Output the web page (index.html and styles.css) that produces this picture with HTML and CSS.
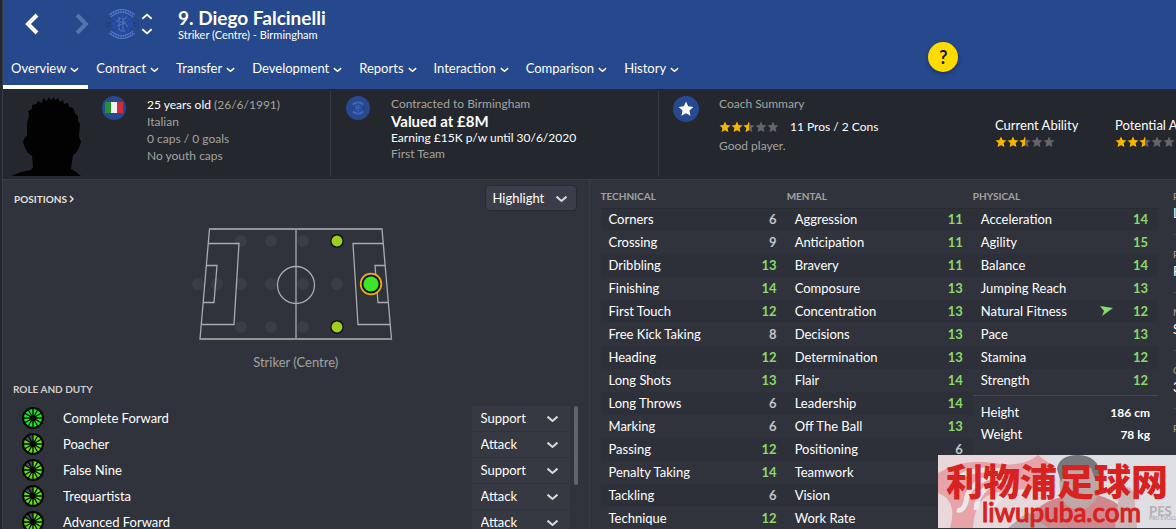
FILE: index.html
```
<!DOCTYPE html>
<html lang="en">
<head>
    <meta charset="UTF-8">
    <meta name="viewport" content="width=device-width, initial-scale=1.0">
    <title>Diego Falcinelli - Overview</title>
    <link rel="stylesheet" href="styles.css">
</head>
<body>
    <!-- Shared icons -->
    <svg class="defs" width="0" height="0" aria-hidden="true">
        <symbol id="chevron" viewBox="0 0 12 12"><path d="M2 4.5 6 8l4-3.5" fill="none" stroke="currentColor" stroke-width="1.6"/></symbol>
        <symbol id="star" viewBox="0 0 12 12"><path d="M6 .4 7.6 4l3.9.5-2.900 2.600.8 4L6 9.200l-3.400 1.900.8-4L.5 4.500 4.400 4z"/></symbol>
        <symbol id="rating" viewBox="0 0 60 12">
            <g fill="#f7b500">
                <use href="#star" width="12" height="12"/>
                <use href="#star" x="12" width="12" height="12"/>
            </g>
            <g fill="#63656b">
                <use href="#star" x="24" width="12" height="12"/>
                <use href="#star" x="36" width="12" height="12"/>
                <use href="#star" x="48" width="12" height="12"/>
            </g>
            <path d="M30 .4 28.400 4l-3.900.5 2.900 2.600-.8 4 3.400-1.900z" fill="#f7b500"/>
        </symbol>
        <symbol id="crest" viewBox="0 0 32 30">
            <g fill="none" stroke="#5475c4">
                <path d="M4 7Q16-3 28 7M4 23q12 10 24 0" stroke-width="4"/>
                <path d="M4 7Q16-3 28 7M4 23q12 10 24 0" stroke="#27489b" stroke-width="2" stroke-dasharray="1.5 1"/>
                <path d="M0 14h5M0 17h4M27 14h5M28 17h4" stroke="#23407f" stroke-width="2"/>
                <circle cx="16" cy="15" r="8" stroke="#2b4da8" stroke-width="5" stroke-dasharray="3 1"/>
                <path d="M13 8v11q0 3 3 3h3M17 9v12M21 8l-4 3M10 13l5-4M11 17l8-3 3 4M14 13h6"/>
            </g>
        </symbol>
        <symbol id="spokes" viewBox="0 0 22 22">
            <path d="M11 0v22M0 11h22M5.500 1.500l11 19M16.500 1.500l-11 19M1.500 5.500l19 11M20.500 5.500l-19 11" fill="none" stroke="#050805" stroke-width="1.300"/>
            <circle cx="11" cy="11" r="3.200" fill="#050805"/>
            <circle cx="11" cy="11" r="10" fill="none" stroke="#050805" stroke-width="2"/>
        </symbol>
        <symbol id="wheel-full" viewBox="0 0 22 22">
            <circle cx="11" cy="11" r="10" fill="#0cf01c"/>
            <use href="#spokes" width="22" height="22"/>
        </symbol>
        <symbol id="wheel-most" viewBox="0 0 22 22">
            <circle cx="11" cy="11" r="10" fill="#62e205"/>
            <path d="M11 11V1Q5 1 2.300 6z" fill="#484b4c"/>
            <use href="#spokes" width="22" height="22"/>
        </symbol>
    </svg>

    <div class="app">
        <header>
            <div class="title-bar">
                <button class="nav-btn" aria-label="Back"><svg width="14" height="22" viewBox="0 0 14 22"><path d="M12 2 3 11l9 9" fill="none" stroke="#fff" stroke-width="4"/></svg></button>
                <button class="nav-btn forward" aria-label="Forward" disabled><svg width="14" height="22" viewBox="0 0 14 22"><path d="M2 2l9 9-9 9" fill="none" stroke="#5474ae" stroke-width="4"/></svg></button>
                <svg class="crest" width="32" height="30"><use href="#crest"/></svg>
                <div class="stepper">
                    <button aria-label="Previous player"><svg class="up" width="14" height="14"><use href="#chevron"/></svg></button>
                    <button aria-label="Next player"><svg width="14" height="14"><use href="#chevron"/></svg></button>
                </div>
                <div class="player">
                    <h1>9. Diego Falcinelli</h1>
                    <p>Striker (Centre) - Birmingham</p>
                </div>
            </div>
            <nav>
                <a href="#" class="active">Overview <svg><use href="#chevron"/></svg></a>
                <a href="#">Contract <svg><use href="#chevron"/></svg></a>
                <a href="#">Transfer <svg><use href="#chevron"/></svg></a>
                <a href="#">Development <svg><use href="#chevron"/></svg></a>
                <a href="#">Reports <svg><use href="#chevron"/></svg></a>
                <a href="#">Interaction <svg><use href="#chevron"/></svg></a>
                <a href="#">Comparison <svg><use href="#chevron"/></svg></a>
                <a href="#">History <svg><use href="#chevron"/></svg></a>
            </nav>
            <button class="help">?</button>
        </header>

        <!-- Player summary -->
        <section class="summary">
            <div class="card">
                <svg class="portrait" width="80" height="80" viewBox="3 97 80 80"><path d="M11 177 21 173 31 171 33 168 32 157 28 154 25 149 23 143 25 138 27 137 27 125 29 116 28 112 32 110 32 106 36 105 38 102 42 104 43 99 47 102 49 98 51 101 54 98 55 101 58 99 60 103 63 101 64 105 68 104 69 108 73 109 75 114 78 117 78 122 80 125 79 137 81 143 79 149 76 154 73 156 71 170 76 173 81 177z" fill="#020202"/></svg>
                <svg class="badge" width="24" height="24" viewBox="0 0 24 24">
                    <circle cx="12" cy="12" r="12" fill="#26498f"/>
                    <path d="M3 6h6v11H3z" fill="#279232"/><path d="M9 6h6v11H9z" fill="#f4f1f2"/><path d="M15 6h6v11h-6z" fill="#d22c3e"/>
                </svg>
                <div class="age">
                    <p class="main">25 years old <span>(26/6/1991)</span></p>
                    <p>Italian</p>
                    <p>0 caps / 0 goals</p>
                    <p>No youth caps</p>
                </div>
            </div>
            <div class="card contract">
                <svg class="badge" width="24" height="24" viewBox="0 0 24 24">
                    <circle cx="12" cy="12" r="12" fill="#26498f"/>
                    <use href="#crest" x="5" y="5" width="14" height="14"/>
                </svg>
                <div>
                    <p>Contracted to Birmingham</p>
                    <p class="value">Valued at £8M</p>
                    <p class="main">Earning £15K p/w until 30/6/2020</p>
                    <p>First Team</p>
                </div>
            </div>
            <div class="card coach">
                <svg class="badge" width="26" height="26" viewBox="0 0 26 26">
                    <circle cx="13" cy="13" r="13" fill="#26498f"/>
                    <use href="#star" x="5" y="5" width="16" height="16" fill="#fff"/>
                </svg>
                <div class="report">
                    <p>Coach Summary</p>
                    <p class="main"><svg class="rating"><use href="#rating"/></svg> 11 Pros / 2 Cons</p>
                    <p>Good player.</p>
                </div>
                <div class="ability">
                    <p class="main">Current Ability</p>
                    <svg class="rating"><use href="#rating"/></svg>
                </div>
                <div class="ability">
                    <p class="main">Potential Ability</p>
                    <svg class="rating"><use href="#rating"/></svg>
                </div>
            </div>
        </section>

        <main>
            <section class="positions">
                <div class="panel-head">
                    <h2><a href="#">POSITIONS <svg width="8" height="8" viewBox="0 0 8 8"><path d="M2 1l3 3-3 3" fill="none" stroke="currentColor" stroke-width="1.5"/></svg></a></h2>
                    <div class="pick highlight">
                        <select aria-label="Highlight"><option>Highlight</option></select>
                        <svg><use href="#chevron"/></svg>
                    </div>
                </div>

                <svg class="pitch" width="208" height="120" viewBox="192 224 208 120">
                    <g fill="#3a3d46">
                        <circle cx="198" cy="284" r="6"/><circle cx="217" cy="284" r="6"/>
                        <circle cx="241" cy="241" r="6"/><circle cx="241" cy="284" r="6"/><circle cx="241" cy="327" r="6"/>
                        <circle cx="271" cy="241" r="6"/><circle cx="271" cy="284" r="6"/><circle cx="271" cy="327" r="6"/>
                        <circle cx="303" cy="241" r="6"/><circle cx="303" cy="284" r="6"/><circle cx="303" cy="327" r="6"/>
                        <circle cx="337" cy="284" r="6"/>
                    </g>
                    <g fill="none" stroke="#a9abae" stroke-width="1.3">
                        <path d="M209.500 229h172.500L391.500 339H200z"/>
                        <path d="M296 229v110M208 243.500h31l-5 81h-32.500M206 265.500h11l-3 37h-11M383 243.500h-30l5 81h32M385 265.500h-10l3 37h10"/>
                        <circle cx="296" cy="285" r="18.500"/>
                    </g>
                    <path d="M209 229h173M200 339h192" stroke="#929496" stroke-width="2"/>
                    <g fill="#9fce20" stroke="#14170f" stroke-width="1.5">
                        <circle cx="337" cy="241" r="6.2"/><circle cx="337" cy="327" r="6.2"/>
                    </g>
                    <circle cx="371" cy="284" r="10.300" fill="#101510" stroke="#efae12" stroke-width="1.7"/>
                    <circle cx="371" cy="284" r="7.600" fill="#3fe32c"/>
                </svg>
                <p class="pitch-label">Striker (Centre)</p>

                <h2 class="role-head">ROLE AND DUTY</h2>
                <div class="roles">
                    <ul>
                        <li><svg class="wheel"><use href="#wheel-full"/></svg><span>Complete Forward</span>
                            <div class="pick"><select aria-label="Complete Forward duty"><option>Support</option></select><svg><use href="#chevron"/></svg></div></li>
                        <li><svg class="wheel"><use href="#wheel-most"/></svg><span>Poacher</span>
                            <div class="pick"><select aria-label="Poacher duty"><option>Attack</option></select><svg><use href="#chevron"/></svg></div></li>
                        <li><svg class="wheel"><use href="#wheel-most"/></svg><span>False Nine</span>
                            <div class="pick"><select aria-label="False Nine duty"><option>Support</option></select><svg><use href="#chevron"/></svg></div></li>
                        <li><svg class="wheel"><use href="#wheel-most"/></svg><span>Trequartista</span>
                            <div class="pick"><select aria-label="Trequartista duty"><option>Attack</option></select><svg><use href="#chevron"/></svg></div></li>
                        <li><svg class="wheel"><use href="#wheel-most"/></svg><span>Advanced Forward</span>
                            <div class="pick"><select aria-label="Advanced Forward duty"><option>Attack</option></select><svg><use href="#chevron"/></svg></div></li>
                    </ul>
                    <div class="scrollbar"></div>
                </div>
            </section>

            <!-- Attributes -->
            <section class="attributes">
                <table>
                    <thead><tr><th colspan="2">TECHNICAL</th></tr></thead>
                    <tbody>
                        <tr><td>Corners</td><td>6</td></tr>
                        <tr><td>Crossing</td><td>9</td></tr>
                        <tr><td>Dribbling</td><td class="good">13</td></tr>
                        <tr><td>Finishing</td><td class="good">14</td></tr>
                        <tr><td>First Touch</td><td class="good">12</td></tr>
                        <tr><td>Free Kick Taking</td><td>8</td></tr>
                        <tr><td>Heading</td><td class="good">12</td></tr>
                        <tr><td>Long Shots</td><td class="good">13</td></tr>
                        <tr><td>Long Throws</td><td>6</td></tr>
                        <tr><td>Marking</td><td>6</td></tr>
                        <tr><td>Passing</td><td class="good">12</td></tr>
                        <tr><td>Penalty Taking</td><td class="good">14</td></tr>
                        <tr><td>Tackling</td><td>6</td></tr>
                        <tr><td>Technique</td><td class="good">12</td></tr>
                    </tbody>
                </table>
                <table>
                    <thead><tr><th colspan="2">MENTAL</th></tr></thead>
                    <tbody>
                        <tr><td>Aggression</td><td class="good">11</td></tr>
                        <tr><td>Anticipation</td><td class="good">11</td></tr>
                        <tr><td>Bravery</td><td class="good">11</td></tr>
                        <tr><td>Composure</td><td class="good">13</td></tr>
                        <tr><td>Concentration</td><td class="good">13</td></tr>
                        <tr><td>Decisions</td><td class="good">13</td></tr>
                        <tr><td>Determination</td><td class="good">13</td></tr>
                        <tr><td>Flair</td><td class="good">14</td></tr>
                        <tr><td>Leadership</td><td class="good">14</td></tr>
                        <tr><td>Off The Ball</td><td class="good">13</td></tr>
                        <tr><td>Positioning</td><td>6</td></tr>
                        <tr><td>Teamwork</td><td></td></tr>
                        <tr><td>Vision</td><td></td></tr>
                        <tr><td>Work Rate</td><td></td></tr>
                    </tbody>
                </table>
                <div class="physical">
                    <table>
                        <thead><tr><th colspan="2">PHYSICAL</th></tr></thead>
                        <tbody>
                            <tr><td>Acceleration</td><td class="good">14</td></tr>
                            <tr><td>Agility</td><td class="good">15</td></tr>
                            <tr><td>Balance</td><td class="good">14</td></tr>
                            <tr><td>Jumping Reach</td><td class="good">13</td></tr>
                            <tr><td>Natural Fitness</td><td class="good"><svg class="trend" width="13" height="10" viewBox="0 0 13 10"><path d="M0 0 13 2 2 10l2-5z" fill="#8bd96b"/></svg>12</td></tr>
                            <tr><td>Pace</td><td class="good">13</td></tr>
                            <tr><td>Stamina</td><td class="good">12</td></tr>
                            <tr><td>Strength</td><td class="good">12</td></tr>
                        </tbody>
                    </table>
                    <table class="body-size">
                        <tbody>
                            <tr><td>Height</td><td>186 cm</td></tr>
                            <tr><td>Weight</td><td>78 kg</td></tr>
                        </tbody>
                    </table>
                </div>
                <dl>
                    <div><dt>P</dt><dd>L</dd></div>
                    <div><dt>P</dt><dd>F</dd></div>
                    <div><dt>M</dt><dd>S</dd></div>
                    <div><dt>O</dt><dd>3</dd></div>
                    <div><dt>P</dt></div>
                </dl>
            </section>
        </main>
    </div>

    <!-- Site watermark -->
    <aside class="watermark">
        <svg viewBox="0 0 238 73" preserveAspectRatio="none" aria-hidden="true">
            <path d="M0 0h238v73H0z" fill="#dfdee2"/>
            <path d="M0 0h110v73H0z" fill="#e9d8db"/>
            <path d="M0 18Q25 3 55 8T100 0l16 12-20 21-34 4q-25 2-27 36H12Q20 45 0 38z" fill="#e6a4aa"/>
            <path d="M20 22q25-12 50-4-40 5-42 29-3 10-9 8M38 55q2-28 32-28M50 65q2-20 25-30" fill="none" stroke="#efe6e8" stroke-width="5"/>
            <path d="M92 73q2-25 32-31l35-2q30 7 34 33z" fill="#cf888d"/>
            <path d="M121 11q5-11 20-11 18 1 20 18l-1 22q-7 15-20 15-15-3-18-18z" fill="#bda8a8"/>
            <path d="M119 14Q121 0 140 0q20 1 22 18l-5 6-4-11-25-2-5 16z" fill="#78777d"/>
            <path d="M182 33q9-4 14 5l3 35h-22z" fill="#cbb6b8"/>
            <path d="M70 73l20-16 20 16z" fill="#b7a6ac"/>
        </svg>
        <strong>利物浦足球网</strong>
        <span class="site">liwupuba.com</span>
        <span class="game">PES<small>PRO EVOLU</small></span>
    </aside>
</body>
</html>
```
FILE: styles.css
```
* {
    box-sizing: border-box;
}

body {
    margin: 0;
    height: 100vh;
    overflow: hidden;
    background: #24262e;
    color: #fff;
    font-family: Lato, "Noto Sans CJK SC", sans-serif;
    font-size: 13px;
    line-height: 17px;
}

h1, h2, p, ul, dl, dd {
    margin: 0;
    padding: 0;
}

a {
    color: inherit;
    text-decoration: none;
}

button, select {
    font: inherit;
    color: inherit;
    border: none;
    background: none;
    padding: 0;
    cursor: pointer;
}

svg {
    display: block;
    flex: none;
}

.defs {
    position: absolute;
}

.app {
    margin-left: 2px;
    border-left: 1px solid #373b46;
    min-height: 100vh;
    background: #31333c;
}

/* Header */
header {
    position: relative;
    height: 89px;
    background: #26488d;
}

.title-bar {
    display: flex;
    height: 49px;
    padding: 9px 0 0 22px;
}

.nav-btn {
    height: 30px;
}

.nav-btn.forward {
    margin-left: 36px;
}

.crest {
    margin-left: 17px;
}

.stepper {
    display: flex;
    flex-direction: column;
    padding: 1px 0 0 2px;
    margin-right: 24px;
}

.stepper button {
    height: 14px;
}

.stepper .up {
    transform: scaleY(-1);
}

h1 {
    font-size: 19px;
    line-height: 18px;
    font-weight: bold;
}

.title-bar p {
    font-size: 11px;
    line-height: 15px;
}

nav {
    display: flex;
    height: 40px;
}

nav a {
    display: flex;
    align-items: center;
    gap: 3px;
    padding: 6px 8px 4px;
    border-bottom: 4px solid transparent;
}

nav a.active {
    border-bottom-color: #fff;
}

nav svg {
    width: 11px;
    height: 11px;
    margin-top: 2px;
}

.help {
    position: absolute;
    left: 80%;
    top: 42px;
    margin-left: -13px;
    width: 30px;
    height: 30px;
    border-radius: 50%;
    background: #ffdb00;
    color: #111;
    font-size: 18px;
    font-weight: bold;
    box-shadow: 0 2px 4px rgba(0, 0, 0, 0.3);
}

/* Player summary */
.summary {
    display: grid;
    grid-template-columns: 327fr 328fr 518fr;
    height: 91px;
    background: #24272e;
    border-bottom: 1px solid #3a3d46;
    overflow: hidden;
}

.card {
    display: flex;
    min-width: 0;
    margin: 2px 0;
    padding-top: 5px;
    color: #a3a49f;
    font-size: 12px;
    white-space: nowrap;
}

.card + .card {
    border-left: 1px solid #34373e;
}

.card .main {
    color: #fff;
}

.main span {
    color: #a3a49f;
}

.badge {
    margin-left: 15px;
}

.portrait + .badge {
    margin-left: 19px;
}

.age {
    margin-left: 21px;
}

.contract .badge {
    margin-right: 21px;
}

.coach .badge {
    margin: 0 20px 0 14px;
}

.card .value {
    color: #fff;
    font-size: 15px;
    font-weight: bold;
}

.contract p {
    line-height: 16px;
}

.contract .value {
    line-height: 18px;
}

.report {
    flex: 1;
}

.report p {
    line-height: 16px;
}

.report .main {
    display: flex;
    align-items: center;
    gap: 11px;
    margin: 7px 0 3px;
}

.ability {
    width: 120px;
    padding-top: 21px;
}

.ability .main {
    font-size: 13px;
}

.ability:last-child {
    width: 61px;
}

.rating {
    width: 60px;
    height: 12px;
}

.ability .rating {
    margin-top: 2px;
}

/* Main panels */
main {
    display: grid;
    grid-template-columns: 1fr 1fr;
}

h2, th {
    font-size: 10px;
    line-height: 14px;
    font-weight: bold;
}

.positions {
    border-right: 1px solid #393c45;
}

.panel-head {
    display: flex;
    justify-content: space-between;
    padding: 5px 12px 0 11px;
}

.panel-head h2 {
    padding-top: 7px;
    color: #e0e0dc;
}

.panel-head a {
    display: flex;
    align-items: center;
    gap: 1px;
}

.pick {
    position: relative;
    width: 98px;
}

.pick select {
    appearance: none;
    width: 100%;
    height: 25px;
    padding: 0 9px;
    background: #363942;
}

.pick svg {
    position: absolute;
    right: 10px;
    top: 5px;
    width: 15px;
    height: 15px;
    color: #d8d8d8;
    pointer-events: none;
}

.highlight {
    width: 92px;
}

.highlight select {
    height: 26px;
    padding: 0 7px;
    background: #3b3d49;
    border: 1px solid #292b33;
    border-radius: 4px;
}

.highlight svg {
    right: 8px;
    top: 6px;
}

.pitch {
    margin: 13px auto 10px;
}

.pitch-label {
    color: #a3a49f;
    text-align: center;
}

.role-head {
    margin: 11px 0 9px 10px;
    color: #cfcfca;
}

.roles {
    display: flex;
    padding-right: 11px;
}

.roles ul {
    flex: 1;
    list-style: none;
}

.roles li {
    display: flex;
    align-items: center;
    height: 26px;
    padding-left: 19px;
}

.roles li span {
    flex: 1;
    padding-left: 19px;
}

.wheel {
    width: 22px;
    height: 22px;
}

.scrollbar {
    width: 4px;
    height: 79px;
    margin: 1px 0 0 4px;
    border-radius: 2px;
    background: #62646c;
}

.attributes {
    display: grid;
    grid-template-columns: 186fr 186fr 200fr 3px;
    align-items: start;
    padding: 9px 0 0 11px;
    overflow: hidden;
}

.physical {
    margin-right: 15px;
}

table {
    width: 100%;
    border-collapse: collapse;
}

th {
    height: 19px;
    padding: 0 0 4px;
    color: #a3a49f;
    text-align: left;
    border-bottom: 1px solid #292b32;
}

td {
    height: 23px;
    padding: 0 0 0 8px;
}

tbody tr:nth-child(odd) {
    background: #2e3039;
}

td:last-child {
    padding: 0 10px 0 0;
    color: #c4c5c8;
    font-weight: bold;
    text-align: right;
}

td:last-child.good {
    color: #8bd96b;
}

.trend {
    display: inline-block;
    margin-right: 20px;
}

.body-size {
    margin-top: 3px;
    padding-top: 5px;
    border-top: 1px solid #44474e;
    border-collapse: separate;
    border-spacing: 0;
}

.body-size tr:nth-child(odd) {
    background: none;
}

.body-size td {
    height: 22px;
}

.body-size td:last-child {
    padding-right: 8px;
    color: #fff;
    font-size: 12px;
}

dl {
    overflow: hidden;
}

dl div {
    height: 58px;
    border-bottom: 1px solid #44474e;
}

dl div:first-child {
    height: 46px;
}

dl div:last-child {
    border-bottom: none;
}

dl div + div {
    padding-top: 12px;
}

dt {
    font-size: 10px;
    line-height: 14px;
    color: #a3a49f;
}

dd {
    line-height: 21px;
}

/* Watermark */
.watermark {
    position: absolute;
    right: 0;
    bottom: 1px;
    width: 238px;
    height: 73px;
    padding: 6px 0 0 8px;
    color: #d82222;
    font-family: "Noto Sans CJK SC", sans-serif;
}

.watermark > svg {
    position: absolute;
    left: 0;
    top: 0;
    width: 100%;
    height: 100%;
}

.watermark strong {
    display: block;
    position: relative;
    width: fit-content;
    font-size: 37px;
    line-height: 39px;
    font-weight: 900;
    white-space: nowrap;
}

.site {
    display: block;
    position: relative;
    width: fit-content;
    margin-left: 36px;
    font-family: Lato, sans-serif;
    font-size: 26px;
    line-height: 24px;
    font-weight: 500;
    -webkit-text-stroke: 1px #d82222;
}

.game {
    position: absolute;
    right: 0;
    bottom: 8px;
    width: 27px;
    overflow: hidden;
    color: #b3b2b7;
    font-family: Lato, sans-serif;
    font-size: 13px;
    line-height: 10px;
    font-weight: 900;
}

.game small {
    display: block;
    font-size: 5px;
    line-height: 4px;
    white-space: nowrap;
}
```
